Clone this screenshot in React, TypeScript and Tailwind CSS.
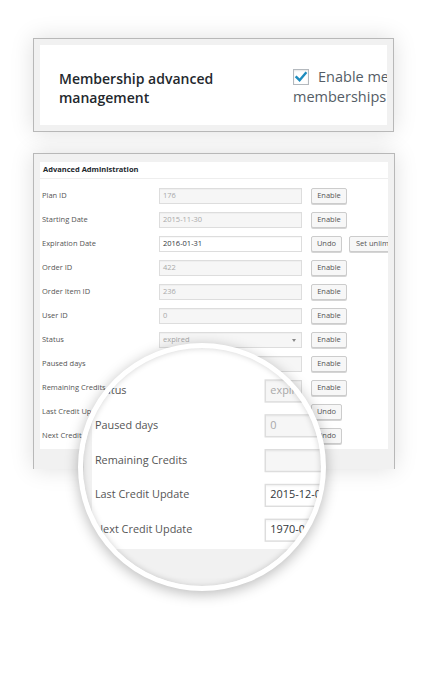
import React from 'react';

type Row = {
  label: string;
  value: string;
  kind: 'dis' | 'on' | 'sel';
  btn: 'Enable' | 'Undo';
  extra?: string;
};

const rows: Row[] = [
  { label: 'Plan ID', value: '176', kind: 'dis', btn: 'Enable' },
  { label: 'Starting Date', value: '2015-11-30', kind: 'dis', btn: 'Enable' },
  { label: 'Expiration Date', value: '2016-01-31', kind: 'on', btn: 'Undo', extra: 'Set unlimited' },
  { label: 'Order ID', value: '422', kind: 'dis', btn: 'Enable' },
  { label: 'Order Item ID', value: '236', kind: 'dis', btn: 'Enable' },
  { label: 'User ID', value: '0', kind: 'dis', btn: 'Enable' },
  { label: 'Status', value: 'expired', kind: 'sel', btn: 'Enable' },
  { label: 'Paused days', value: '0', kind: 'dis', btn: 'Enable' },
  { label: 'Remaining Credits', value: '', kind: 'dis', btn: 'Enable' },
  { label: 'Last Credit Update', value: '2015-12-01', kind: 'on', btn: 'Undo' },
  { label: 'Next Credit Update', value: '1970-01-01', kind: 'on', btn: 'Undo' },
];

function Btn({ text, wide }: { text: string; wide?: 'enable' | 'undo' | 'auto' }) {
  const w = wide === 'enable' ? 'w-[36px]' : wide === 'undo' ? 'w-[31px]' : 'px-[6px]';
  return (
    <div
      className={`${w} flex h-4 shrink-0 items-center justify-center whitespace-nowrap rounded-[2px] border border-[#cccccc] bg-[#f7f7f7] text-[7.5px] leading-none text-[#555555] shadow-[0_1px_0_#d5d5d5]`}
    >
      {text}
    </div>
  );
}

function FieldRow({ r, hidden, lens }: { r: Row; hidden: boolean; lens: boolean }) {
  const inputCls =
    r.kind === 'on'
      ? 'bg-white text-[#32373c]'
      : 'bg-[#f6f6f6] text-[#a9a9a9]';
  return (
    <div className={`flex h-4 items-center ${hidden ? 'invisible' : ''}`}>
      <div className="w-[119px] shrink-0 whitespace-nowrap pl-[2px] text-[7.5px] leading-none text-[#555555]">
        {r.label}
      </div>
      <div
        className={`flex h-4 w-[143px] shrink-0 items-center justify-between overflow-hidden border border-[#dddddd] px-[3px] text-[7.5px] leading-none shadow-[inset_0_1px_1px_rgba(0,0,0,0.03)] ${inputCls}`}
      >
        <span className="whitespace-nowrap">{r.value}</span>
        {r.kind === 'sel' && (
          <svg width="4" height="3" viewBox="0 0 4 3" className="mr-[2px]">
            <path d="M0 0 L4 0 L2 3 Z" fill="#888888" />
          </svg>
        )}
      </div>
      <div className={`ml-[9px] flex shrink-0 items-center gap-[7px] ${lens ? 'invisible' : ''}`}>
        <Btn text={r.btn} wide={r.btn === 'Enable' ? 'enable' : 'undo'} />
        {r.extra && <Btn text={r.extra} wide="auto" />}
      </div>
    </div>
  );
}

function TopCard({ lens }: { lens: boolean }) {
  return (
    <div
      className={`w-[361px] border border-[#b8b8b8] bg-[#f1f1f1] p-[6px] shadow-[0_0_22px_rgba(0,0,0,0.13)] ${lens ? 'invisible' : ''}`}
    >
      <div className="flex h-[80px] items-start overflow-hidden bg-white pt-[22px]">
        <div className="mt-[2px] w-[253px] shrink-0 pl-[19px] pr-[20px] text-[14px] font-semibold leading-[19px] text-[#23282d]">
          Membership advanced management
        </div>
        <div className="text-[14.5px] leading-[20px] text-[#555d66]">
          <div className="flex items-center whitespace-nowrap">
            <span className="mr-[9px] flex size-4 shrink-0 items-center justify-center border border-[#b4b9be] bg-white shadow-[inset_0_1px_2px_rgba(0,0,0,0.1)]">
              <svg width="14" height="14" viewBox="0 0 14 14">
                <path d="M2.5 7.2 L5.6 10.2 L11.6 3.2" fill="none" stroke="#1e8cbe" strokeWidth="2.4" strokeLinecap="square" />
              </svg>
            </span>
            Enable membership advanced management for
          </div>
          <div className="whitespace-nowrap">memberships</div>
        </div>
      </div>
    </div>
  );
}

function AdminCard({ lens }: { lens: boolean }) {
  return (
    <div className="mt-[21px] h-[316px] w-[362px] border-x border-t border-[#b8b8b8] bg-[#f1f1f1] px-[6px] pt-[8px] shadow-[0_0_22px_rgba(0,0,0,0.13)]">
      <div className="h-[287px] overflow-hidden bg-white">
        <div className="flex h-[17px] items-center border-b border-[#eeeeee] pl-[3px] text-[7.5px] font-bold leading-none text-[#23282d]">
          <span className={lens ? 'invisible' : ''}>Advanced Administration</span>
        </div>
        <div className="flex flex-col gap-2 pt-[9px]">
          {rows.map((r, i) => (
            <FieldRow key={r.label} r={r} hidden={lens && i < 6} lens={lens} />
          ))}
        </div>
      </div>
    </div>
  );
}

function Content({ lens }: { lens: boolean }) {
  return (
    <div className="h-[674px] w-[421px] bg-white pl-[33px] pt-[38px] font-['Open_Sans',sans-serif]">
      <TopCard lens={lens} />
      <AdminCard lens={lens} />
    </div>
  );
}

export default function App() {
  return (
    <div className="relative h-[674px] w-[421px] overflow-hidden bg-white">
      <Content lens={false} />
      <div className="absolute left-[78px] top-[343px] size-[248px] overflow-hidden rounded-full border-[5px] border-white bg-white shadow-[0_3px_14px_rgba(0,0,0,0.28)]">
        <div className="absolute left-[-83px] top-[-348px] h-[674px] w-[421px] origin-top-left [transform:translate(34px,-102px)_scale(1.45)]">
          <Content lens={true} />
        </div>
        <div className="absolute inset-0 rounded-full shadow-[inset_0_0_6px_rgba(0,0,0,0.18)]" />
      </div>
    </div>
  );
}
